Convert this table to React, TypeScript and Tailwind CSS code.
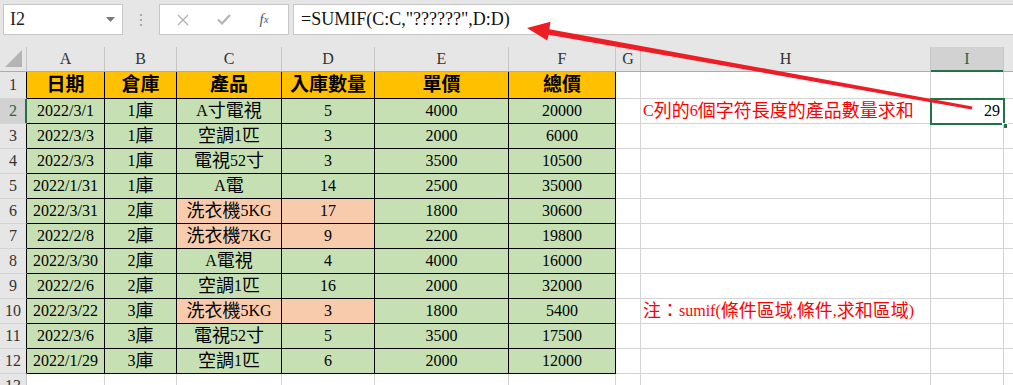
import React from "react";

const FONT = "[font-family:'Liberation_Serif','Noto_Sans_CJK_TC',serif]";

// widths: row header, A..I, J (partial)
const W = [
  "w-[27px] shrink-0",
  "w-[78px] shrink-0",
  "w-[72px] shrink-0",
  "w-[105px] shrink-0",
  "w-[93px] shrink-0",
  "w-[134px] shrink-0",
  "w-[107px] shrink-0",
  "w-[25px] shrink-0",
  "w-[290px] shrink-0",
  "w-[73px] shrink-0",
  "w-[20px] shrink-0",
];
const LETTERS = ["A", "B", "C", "D", "E", "F", "G", "H", "I", ""];

const HEAD = ["日期", "倉庫", "產品", "入庫數量", "單價", "總價"];

const ROWS: string[][] = [
  ["2022/3/1", "1庫", "A寸電視", "5", "4000", "20000"],
  ["2022/3/3", "1庫", "空調1匹", "3", "2000", "6000"],
  ["2022/3/3", "1庫", "電視52寸", "3", "3500", "10500"],
  ["2022/1/31", "1庫", "A電", "14", "2500", "35000"],
  ["2022/3/31", "2庫", "洗衣機5KG", "17", "1800", "30600"],
  ["2022/2/8", "2庫", "洗衣機7KG", "9", "2200", "19800"],
  ["2022/3/30", "2庫", "A電視", "4", "4000", "16000"],
  ["2022/2/6", "2庫", "空調1匹", "16", "2000", "32000"],
  ["2022/3/22", "3庫", "洗衣機5KG", "3", "1800", "5400"],
  ["2022/3/6", "3庫", "電視52寸", "5", "3500", "17500"],
  ["2022/1/29", "3庫", "空調1匹", "6", "2000", "12000"],
];

const ORANGE_ROWS = [4, 5, 8];

// CJK glyphs in the sheet run wider than the latin ones
function Txt({ s, big }: { s: string; big?: boolean }) {
  const parts = s.split(/([\u2E80-\u9FFF\uFF00-\uFFEF]+)/);
  return (
    <>
      {parts.map((p, i) =>
        /[\u2E80-\u9FFF\uFF00-\uFFEF]/.test(p) ? (
          <span key={i} className={big ? "text-[19px]" : "text-[18px]"}>{p}</span>
        ) : (
          <React.Fragment key={i}>{p}</React.Fragment>
        )
      )}
    </>
  );
}

function FormulaBar() {
  return (
    <div className="flex h-[47px] items-start bg-[#e6e6e6] pt-[4px] pl-[3px]">
      <div className="flex h-[31px] w-[120px] shrink-0 items-center justify-between border border-[#c6c6c6] bg-white pl-[6px] pr-[7px]">
        <span className="text-[18px] text-[#222]">I2</span>
        <svg width="9" height="5" viewBox="0 0 9 5">
          <path d="M0 0h9L4.5 5z" fill="#777" />
        </svg>
      </div>
      <div className="flex h-[31px] w-[36px] shrink-0 flex-col items-center justify-center gap-[3px]">
        <span className="h-[2px] w-[2px] bg-[#aaa]" />
        <span className="h-[2px] w-[2px] bg-[#aaa]" />
        <span className="h-[2px] w-[2px] bg-[#aaa]" />
      </div>
      <div className="flex h-[31px] w-[130px] shrink-0 items-center border border-[#c6c6c6] bg-white">
        <div className="flex w-[44px] justify-center pl-[2px]">
          <svg width="12" height="12" viewBox="0 0 12 12">
            <path d="M1 1l10 10M11 1L1 11" stroke="#b3b3b3" strokeWidth="1.4" />
          </svg>
        </div>
        <div className="flex w-[40px] justify-center">
          <svg width="14" height="11" viewBox="0 0 14 11">
            <path d="M1 5.5l4 4L13 1" stroke="#b3b3b3" strokeWidth="2.2" fill="none" />
          </svg>
        </div>
        <div className="flex flex-1 justify-center pr-[4px] italic text-[#555]">
          <span className="text-[15px]">f</span>
          <span className="mt-[3px] text-[11px]">x</span>
        </div>
      </div>
      <div className="ml-[4px] flex h-[31px] flex-1 items-center border border-r-0 border-[#c6c6c6] bg-white pl-[7px]">
        <span className="whitespace-nowrap text-[18px] text-[#111]">=SUMIF(C:C,"??????",D:D)</span>
      </div>
    </div>
  );
}

function ColumnHeader() {
  return (
    <div className="flex h-[25px] border-b border-[#ababab] bg-[#e6e6e6]">
      <div className={`${W[0]} relative border-r border-[#c6c6c6]`}>
        <svg className="absolute right-[4px] bottom-[4px]" width="17" height="17" viewBox="0 0 17 17">
          <path d="M17 0V17H0z" fill="#b4b4b4" />
        </svg>
      </div>
      {LETTERS.map((l, i) => (
        <div
          key={i}
          className={`${W[i + 1]} flex items-center justify-center border-r border-[#c6c6c6] text-[16px] ${
            l === "I" ? "relative bg-[#d2d2d2] text-[#1d6b3f]" : "text-[#333]"
          }`}
        >
          {l}
          {l === "I" && <span className="absolute -bottom-[1px] left-0 right-0 h-[2px] bg-[#217346]" />}
        </div>
      ))}
    </div>
  );
}

function RowHead({ n, sel, black }: { n: number; sel?: boolean; black?: boolean }) {
  return (
    <div
      className={`${W[0]} relative flex items-center justify-center border-b border-r border-b-[#d4d4d4] text-[16px] ${
        black ? "border-r-black" : "border-r-[#c6c6c6]"
      } ${sel ? "bg-[#d2d2d2] text-[#1d6b3f]" : "bg-[#e6e6e6] text-[#333]"}`}
    >
      {n}
      {sel && <span className="absolute -right-[1px] top-0 bottom-0 w-[2px] bg-[#217346]" />}
    </div>
  );
}

function Blank({ i }: { i: number }) {
  return <div className={`${W[i]} border-b border-r border-[#d4d4d4] bg-white`} />;
}

function Sheet() {
  return (
    <div className="text-[16px] text-black">
      <ColumnHeader />
      {/* row 1: table header */}
      <div className="flex h-[27px]">
        <RowHead n={1} black />
        {HEAD.map((h, i) => (
          <div
            key={i}
            className={`${W[i + 1]} flex items-center justify-center border-b border-r border-black bg-[#ffc000] font-bold`}
          >
            <Txt s={h} big />
          </div>
        ))}
        <Blank i={7} />
        <Blank i={8} />
        <Blank i={9} />
        <Blank i={10} />
      </div>
      {ROWS.map((r, ri) => {
        const n = ri + 2;
        return (
          <div key={n} className="flex h-[25px]">
            <RowHead n={n} sel={n === 2} black />
            {r.map((c, ci) => {
              const orange = ORANGE_ROWS.includes(ri) && (ci === 2 || ci === 3);
              return (
                <div
                  key={ci}
                  className={`${W[ci + 1]} flex items-center justify-center whitespace-nowrap border-b border-r border-black ${
                    orange ? "bg-[#f8cbad]" : "bg-[#c6e0b4]"
                  }`}
                >
                  <Txt s={c} />
                </div>
              );
            })}
            <Blank i={7} />
            <div className={`${W[8]} flex items-center whitespace-nowrap border-b border-r border-[#d4d4d4] pl-[2px] text-[#ff0000]`}>
              {n === 2 && <Txt s="C列的6個字符長度的產品數量求和" />}
              {n === 10 && <Txt s="注：sumif(條件區域,條件,求和區域)" />}
            </div>
            <div className={`${W[9]} relative flex items-center justify-end border-b border-r border-[#d4d4d4] pr-[3px]`}>
              {n === 2 && (
                <>
                  <span>29</span>
                  <span className="absolute -left-[1px] -top-[1px] -right-[2px] -bottom-[2px] border-2 border-[#217346]" />
                  <span className="absolute -right-[5px] -bottom-[6px] h-[6px] w-[6px] border border-white bg-[#217346]" />
                </>
              )}
            </div>
            <Blank i={10} />
          </div>
        );
      })}
      <div className="flex h-[25px]">
        <RowHead n={13} />
        {[1, 2, 3, 4, 5, 6, 7, 8, 9, 10].map((i) => (
          <Blank key={i} i={i} />
        ))}
      </div>
    </div>
  );
}

function Arrow() {
  return (
    <svg className="pointer-events-none absolute inset-0 z-10" width="1013" height="385" viewBox="0 0 1013 385">
      <polygon
        points="527,28 550.5,21.8 549.4,29.3 972.3,106.4 971.7,109.6 548.6,34.7 547.3,40.5"
        fill="#ee1c24"
      />
    </svg>
  );
}

export default function App() {
  return (
    <div className={`relative h-[385px] w-[1013px] overflow-hidden bg-white ${FONT}`}>
      <FormulaBar />
      <Sheet />
      <Arrow />
    </div>
  );
}
